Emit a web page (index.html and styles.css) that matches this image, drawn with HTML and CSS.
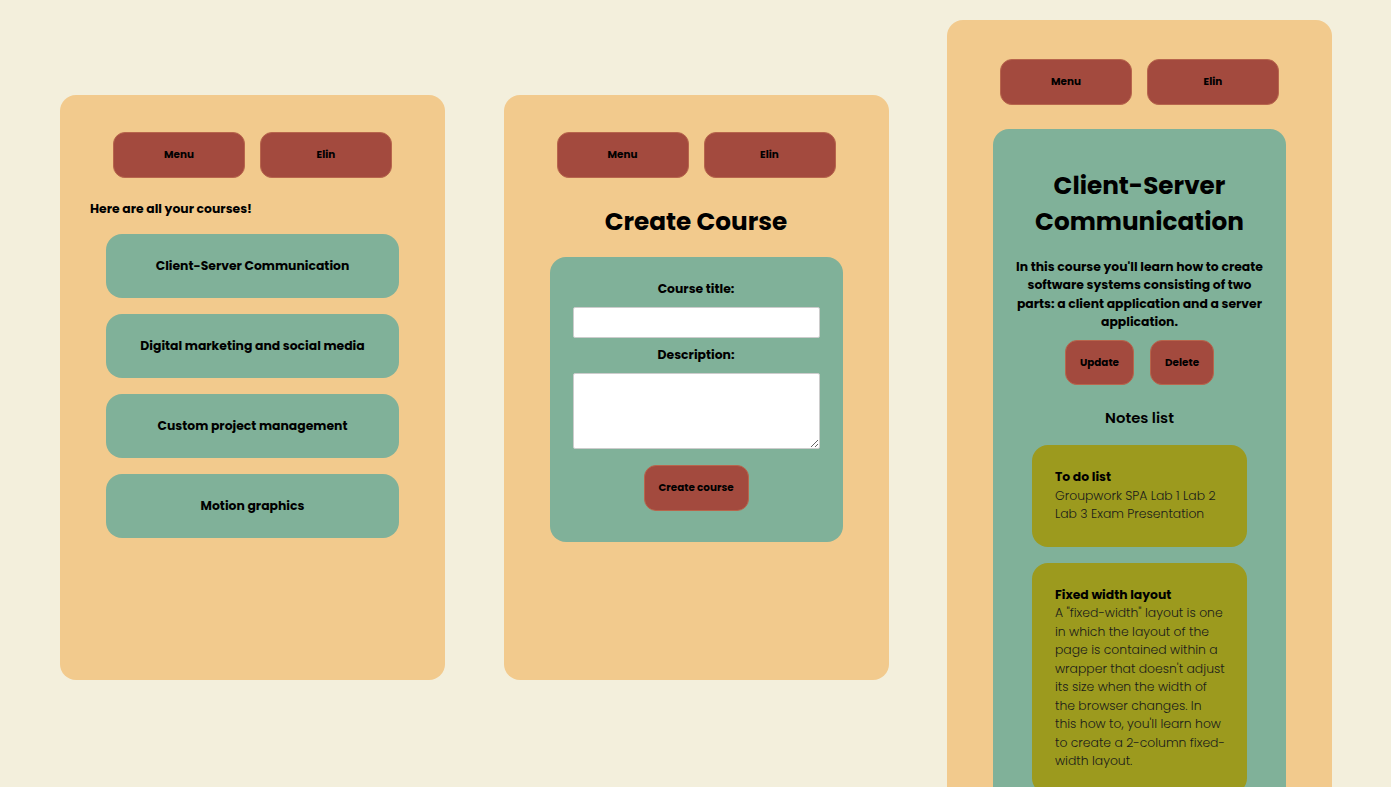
FILE: index.html
```html
<!DOCTYPE html>
<html lang="en">
<head>
  <meta charset="UTF-8">
  <meta content="width=device-width, initial-scale=1.0" name="viewport">
  <title>Courses</title>
  <link rel="stylesheet" href="styles.css">
</head>
<body>
<div class="screens">

  <!-- course list -->
  <div class="screen screen-short">
    <nav class="top-nav">
      <button class="btn nav-btn">Menu</button>
      <button class="btn nav-btn">Elin</button>
    </nav>
    <p class="intro">Here are all your courses!</p>
    <div class="course-list">
      <a class="course-item" href="#">Client-Server Communication</a>
      <a class="course-item" href="#">Digital marketing and social media</a>
      <a class="course-item" href="#">Custom project management</a>
      <a class="course-item" href="#">Motion graphics</a>
    </div>
  </div>

  <!-- create course -->
  <div class="screen screen-short">
    <nav class="top-nav">
      <button class="btn nav-btn">Menu</button>
      <button class="btn nav-btn">Elin</button>
    </nav>
    <h1 class="page-title">Create Course</h1>
    <form class="panel course-form">
      <label for="title">Course title:</label>
      <input id="title" type="text">
      <label for="description">Description:</label>
      <textarea id="description"></textarea>
      <button class="btn create-btn" type="button">Create course</button>
    </form>
  </div>

  <!-- course details -->
  <div class="screen screen-tall">
    <nav class="top-nav">
      <button class="btn nav-btn">Menu</button>
      <button class="btn nav-btn">Elin</button>
    </nav>
    <div class="panel course-detail">
      <h1 class="page-title">Client-Server Communication</h1>
      <p class="course-desc">In this course you'll learn how to create software systems consisting of two parts: a client application and a server application.</p>
      <div class="actions">
        <button class="btn small-btn">Update</button>
        <button class="btn small-btn">Delete</button>
      </div>
      <h2 class="notes-title">Notes list</h2>
      <div class="note">
        <h3>To do list</h3>
        <p>Groupwork SPA Lab 1 Lab 2 Lab 3 Exam Presentation</p>
      </div>
      <div class="note">
        <h3>Fixed width layout</h3>
        <p>A "fixed-width" layout is one in which the layout of the page is contained within a wrapper that doesn't adjust its size when the width of the browser changes. In this how to, you'll learn how to create a 2-column fixed-width layout.</p>
      </div>
    </div>
  </div>

</div>
</body>
</html>
```

FILE: styles.css
```css
body {
  margin: 0;
  background-color: #f3efdc;
  font-family: "Poppins", "Inter", sans-serif;
  color: #000;
}

.screens {
  display: flex;
  align-items: flex-start;
  gap: 58.5px;
  padding: 20px 0 0 60px;
}

.screen {
  width: 385px;
  flex-shrink: 0;
  box-sizing: border-box;
  background-color: #f2ca8d;
  border-radius: 16px;
}

.screen-short {
  margin-top: 75px;
  height: 585px;
  padding-top: 37px;
}

.screen-tall {
  padding: 39px 0 40px;
}

.top-nav {
  display: flex;
  justify-content: center;
  gap: 15px;
}

.btn {
  background-color: #a34a3e;
  border: 1px solid #b8654c;
  border-radius: 12px;
  font-family: inherit;
  font-size: 10.4px;
  font-weight: 700;
  color: #000;
  cursor: pointer;
}

.nav-btn {
  width: 132px;
  height: 46px;
}

.intro {
  margin: 22px 0 16px 30px;
  font-size: 12.4px;
  font-weight: 700;
  line-height: 18px;
}

.course-list {
  display: flex;
  flex-direction: column;
  align-items: center;
  gap: 16px;
}

.course-item {
  display: flex;
  align-items: center;
  justify-content: center;
  width: 293px;
  height: 64px;
  background-color: #80b199;
  border-radius: 16px;
  color: #000;
  text-decoration: none;
  font-size: 12.4px;
  font-weight: 700;
}

.page-title {
  margin: 26px 0 17px;
  text-align: center;
  font-size: 24.7px;
  font-weight: 700;
  line-height: 36px;
}

.panel {
  width: 293px;
  margin: 0 auto;
  box-sizing: border-box;
  background-color: #80b199;
  border-radius: 16px;
}

.course-form {
  display: flex;
  flex-direction: column;
  align-items: center;
  padding: 23px 23px 31px;
}

.course-form label {
  font-size: 12.4px;
  font-weight: 700;
  line-height: 18px;
  margin-bottom: 9px;
}

.course-form input,
.course-form textarea {
  width: 100%;
  box-sizing: border-box;
  border: 1px solid #ccc;
  border-radius: 2px;
  background: #fff;
  margin-bottom: 8px;
}

.course-form input {
  height: 31px;
}

.course-form textarea {
  height: 76px;
  margin-bottom: 16px;
}

.create-btn {
  width: 105px;
  height: 46px;
}

.screen-tall .panel {
  margin-top: 24px;
}

.course-detail {
  padding: 39px 22px 30px;
  text-align: center;
}

.course-detail .page-title {
  margin: 0 0 18px;
}

.course-desc {
  margin: 0;
  font-size: 12.4px;
  font-weight: 700;
  line-height: 18.3px;
}

.actions {
  display: flex;
  justify-content: center;
  gap: 16px;
  margin-top: 9px;
}

.small-btn {
  height: 45px;
  padding: 0 14px;
}

.notes-title {
  margin: 21px 0 15px;
  font-size: 14.8px;
  font-weight: 600;
  line-height: 24px;
}

.note {
  width: 215px;
  box-sizing: border-box;
  margin: 0 auto 16px;
  padding: 23px 21.5px 23px 23px;
  background-color: #9c9a1e;
  border-radius: 16px;
  text-align: left;
  font-size: 12.4px;
  line-height: 18.5px;
}

.note h3 {
  margin: 0;
  font-size: 12.4px;
  font-weight: 700;
}

.note p {
  margin: 0;
  font-weight: 300;
  color: #1a1a1a;
}
```
